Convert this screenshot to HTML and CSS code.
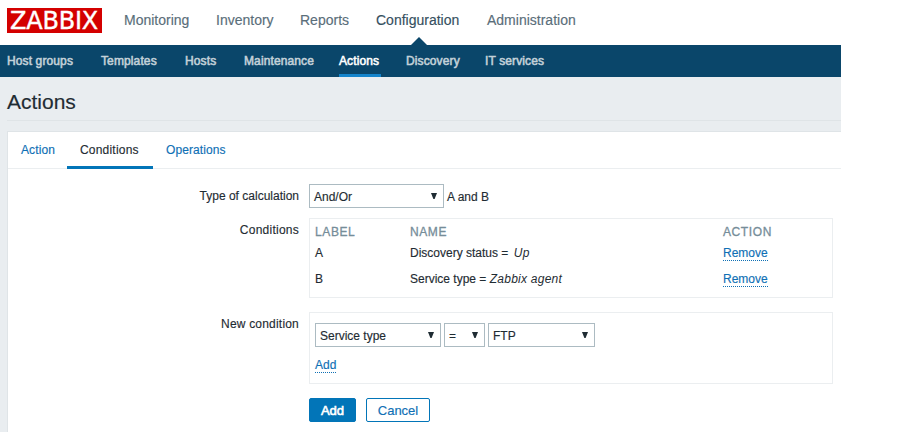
FILE: index.html
```html
<!DOCTYPE html>
<html lang="en">
<head>
<meta charset="utf-8">
<title>Actions</title>
<link rel="stylesheet" href="styles.css">
</head>
<body>
<div class="page">
  <header class="top">
    <a class="logo">ZABBIX</a>
    <nav class="main-nav">
      <a>Monitoring</a><a>Inventory</a><a>Reports</a><a class="selected">Configuration</a><a>Administration</a>
    </nav>
  </header>
  <nav class="sub-nav">
    <a>Host groups</a><a>Templates</a><a>Hosts</a><a>Maintenance</a><a class="selected">Actions</a><a>Discovery</a><a>IT services</a>
  </nav>
  <main class="content">
    <h1>Actions</h1>
    <section class="panel">
      <div class="tabs">
        <a>Action</a><a class="selected">Conditions</a><a>Operations</a>
      </div>
      <form class="form">
        <div class="row row-calc">
          <label>Type of calculation</label>
          <div class="field"><div class="select w-calc">And/Or<i class="arrow"></i></div><span class="formula">A and B</span></div>
        </div>
        <div class="row row-conditions">
          <label>Conditions</label>
          <div class="box table">
            <div class="tr head"><span>LABEL</span><span>NAME</span><span>ACTION</span></div>
            <div class="tr"><span>A</span><span class="name">Discovery status = <em class="status">Up</em></span><span><a class="link">Remove</a></span></div>
            <div class="tr"><span>B</span><span class="name">Service type = <em class="service">Zabbix agent</em></span><span><a class="link">Remove</a></span></div>
          </div>
        </div>
        <div class="row row-new">
          <label>New condition</label>
          <div class="box new">
            <div class="selects">
              <div class="select w-type">Service type<i class="arrow"></i></div>
              <div class="select w-op">=<i class="arrow"></i></div>
              <div class="select w-value">FTP<i class="arrow"></i></div>
            </div>
            <a class="link">Add</a>
          </div>
        </div>
        <div class="actions"><button type="button" class="primary">Add</button><button type="button">Cancel</button></div>
      </form>
    </section>
  </main>
</div>
</body>
</html>
```
FILE: styles.css
```css
* { box-sizing: border-box; }
body {
  margin: 0;
  background: #fff;
  color: #1f2c33;
  font: 12px/14px "Liberation Sans", Arial, sans-serif;
  -webkit-text-stroke: 0.15px;
  overflow: hidden;
}
.page { width: 841px; height: 432px; overflow: hidden; display: flex; flex-direction: column; }
.top { height: 45px; flex: none; padding: 8px 0 0 7px; display: flex; }
.logo {
  width: 95px;
  height: 25px;
  background: #d40000;
  color: #fff;
  font: 24px/27px "DejaVu Sans", sans-serif;
  letter-spacing: -0.2px;
  padding-left: 3px;
  white-space: nowrap;
  -webkit-text-stroke: 0.4px;
}
.main-nav {
  margin-left: 22px;
  display: grid;
  grid-template-columns: 92px 84px 76px 111px 90px;
  font-size: 14px;
  line-height: 24px;
  color: #5a6e7a;
}
.main-nav .selected { color: #36505f; position: relative; }
.main-nav .selected::after {
  content: "";
  position: absolute;
  left: 35px;
  top: 29px;
  border: 8px solid transparent;
  border-top: 0;
  border-bottom-color: #0a466a;
}
.sub-nav {
  height: 32px;
  flex: none;
  padding-left: 7px;
  background: #0a466a;
  color: #c3d1d9;
  display: grid;
  grid-template-columns: 94px 84px 59px 95px 67px 79px 80px;
  line-height: 32px;
  letter-spacing: 0.12px;
  -webkit-text-stroke: 0.55px;
}
.sub-nav .selected {
  color: #fff;
  justify-self: start;
  width: 42px;
  height: 32px;
  border-bottom: 3px solid #1484cb;
}
.content { flex: 1; background: #e9edf0; padding-left: 7px; }
h1 {
  margin: 0 0 10px;
  height: 44px;
  border-bottom: 1px solid #dfe4e7;
  font-size: 21px;
  line-height: 50px;
  font-weight: 400;
}
.panel { height: 310px; background: #fff; border: solid #dfe4e7; border-width: 1px 0 0 1px; }
.tabs { display: flex; height: 37px; border-bottom: 1px solid #ebeef0; color: #0f70b5; letter-spacing: 0.1px; }
.tabs a { height: 37px; line-height: 36px; padding: 0 13px; }
.tabs a:first-child { width: 59px; }
.tabs .selected { width: 86px; color: #1f2c33; border-bottom: 3px solid #0275b8; letter-spacing: 0.2px; }
.form { padding-top: 15px; }
.row { display: grid; grid-template-columns: 291px 524px; column-gap: 10px; }
label { text-align: right; }
.row-calc label { padding-top: 5px; }
.row-conditions { margin-top: 10px; }
.row-conditions label { padding-top: 5px; letter-spacing: 0.25px; }
.row-new { margin-top: 14px; }
.row-new label { padding-top: 5px; letter-spacing: 0.2px; }
.field { display: flex; align-items: center; gap: 3px; height: 24px; }
.formula { padding-top: 2px; }
.select {
  height: 24px;
  border: 1px solid #acbbc2;
  padding: 1px 6px 0 4px;
  line-height: 23px;
  display: flex;
  justify-content: space-between;
}
.arrow { width: 6px; height: 6px; margin-top: 7px; background: #1f2c33; clip-path: polygon(0 0, 100% 0, 60% 100%, 40% 100%); }
.w-calc { width: 135px; }
.w-type { width: 126px; }
.w-op { width: 41px; }
.w-value { width: 107px; }
.box { border: 1px solid #ebeef0; }
.table { height: 80px; padding: 5px; }
.tr { display: grid; grid-template-columns: 95px 313px 100px; height: 26px; line-height: 17px; }
.head { height: 21px; line-height: 16px; color: #768d99; letter-spacing: 0.6px; -webkit-text-stroke: 0.3px; }
em { -webkit-text-stroke: 0; }
.status { margin-left: 2px; letter-spacing: 0.4px; }
.service { letter-spacing: 0.25px; }
.link { display: inline-block; height: 16px; line-height: 17px; color: #0f70b5; border-bottom: 1px dotted #0f70b5; }
.new { height: 72px; padding: 10px 5px; }
.selects { display: flex; gap: 3px; margin-bottom: 10px; }
.actions { display: flex; gap: 10px; margin: 14px 0 0 301px; }
button {
  width: 64px;
  height: 24px;
  padding: 1px 0 0;
  border: 1px solid #0275b8;
  border-radius: 2px;
  background: #fff;
  color: #0f70b5;
  font: 13px/20px "Liberation Sans", Arial, sans-serif;
}
.primary { width: 47px; background: #0275b8; color: #fff; -webkit-text-stroke: 0.6px; }
```
